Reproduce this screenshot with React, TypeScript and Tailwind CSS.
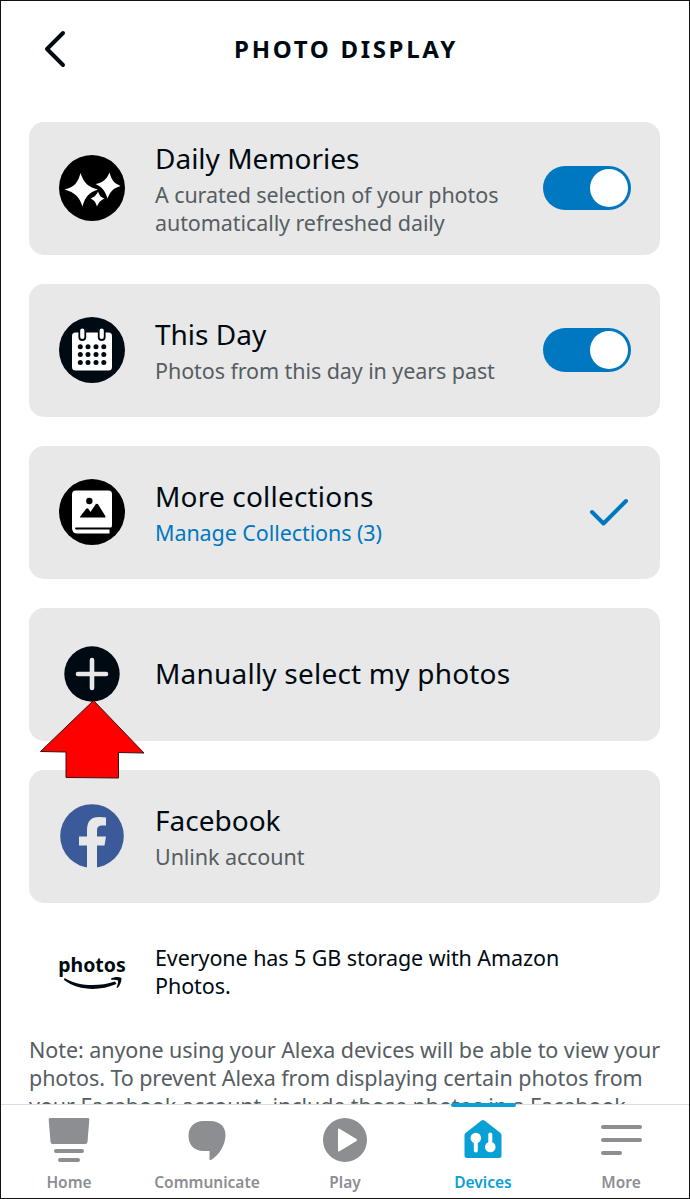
import type { ReactNode } from 'react'

type Card = {
  title: string
  titleClass: string
  sub?: string[]
  subClass?: string
  icon: ReactNode
  right?: ReactNode
  overlay?: ReactNode
}

function SparklesIcon() {
  return (
    <svg width="66" height="66" viewBox="0 0 66 66">
      <circle cx="33" cy="33" r="33" fill="#000" />
      <g fill="#fff">
        <path d="M21.5 18C24.5 27.5 29 32 39 34.5C30 37.5 26 42 23.5 51.5C20.5 42 16 37.5 5.5 34.5C15.5 32 19 27.5 21.5 18Z" />
        <path d="M50.5 17.5C52.5 25 55 28 61.5 31C54 33.5 51.5 36 48.5 43.5C46 36 43.5 32 36.5 29C43.5 27.500 47.5 25 50.5 17.5Z" />
        <path d="M39 36.500C40.5 40.5 41.5 42 45.5 43.5C41.500 45.5 40 47 38 51.5C36.5 47 35.5 45.5 31.5 43.5C35.5 42 37 40.5 39 36.5Z" />
      </g>
    </svg>
  )
}

function CalendarIcon() {
  const cols = [21.3, 29, 37, 44.8]
  const rows = [29.7, 37.6, 45.5]
  return (
    <svg width="66" height="66" viewBox="0 0 66 66">
      <circle cx="33" cy="33" r="33" fill="#000a12" />
      <rect x="13" y="15.5" width="40" height="38" rx="3.5" fill="#fff" />
      {[23.3, 42.7].map((x) => (
        <rect key={x} x={x - 3} y="10.5" width="6" height="12.5" rx="3" fill="#fff" stroke="#000a12" strokeWidth="1.8" />
      ))}
      {rows.map((y) => cols.map((x) => <circle key={`${x}-${y}`} cx={x} cy={y} r="2.5" fill="#000a12" />))}
    </svg>
  )
}

function AlbumIcon() {
  return (
    <svg width="66" height="66" viewBox="0 0 66 66">
      <circle cx="33" cy="33" r="33" fill="#000" />
      <path d="M17 11.5H49.5Q53 11.5 53 15V46Q53 49 50.5 49.5V54.5H18.5Q13 54.5 13 49V15.5Q13 11.5 17 11.5Z" fill="#fff" />
      <path d="M17 49.5H52" stroke="#000" strokeWidth="1.8" strokeLinecap="round" />
      <circle cx="30.3" cy="22" r="3.2" fill="#000" />
      <path d="M21 38.5Q21 37.5 22 36.5L27 30Q28 28.5 29.5 30L31.5 33L36.5 25.5Q37.8 24 39.2 25.5L46 36.5Q47 38.5 46 38.5Z" fill="#000" />
    </svg>
  )
}

function PlusIcon() {
  return (
    <svg width="56" height="56" viewBox="0 0 56 56">
      <circle cx="28" cy="28" r="27.7" fill="#000a12" />
      <path d="M28 14V42M14 28H42" stroke="#e8e8e8" strokeWidth="4.6" strokeLinecap="round" />
    </svg>
  )
}

function FacebookIcon() {
  return (
    <svg width="64" height="64" viewBox="0 0 64 64">
      <circle cx="32" cy="32" r="31.8" fill="#3b5a9a" />
      <path d="M27 64V41.5H19V32.5H27V26Q27 13 39 13Q43 13 46 13.5V21.5H42Q37 21.5 37 26V32.5H46L44.5 41.5H37V64Z" fill="#e8e8e8" />
    </svg>
  )
}

function Toggle() {
  return (
    <div className="flex h-11 w-22 items-center justify-end rounded-full bg-[#0078c1] pr-[3px]">
      <div className="size-[38px] rounded-full bg-white" />
    </div>
  )
}

function PointerArrow() {
  return (
    <svg className="absolute top-[91px] left-[9px] z-10" width="108" height="81" viewBox="0 0 108 81">
      <path d="M55.5 1.5L2.5 52.5L28 53V78.5L80.5 79V53.5L106 54Z" fill="#ff0000" stroke="#3a1111" strokeWidth="1" />
    </svg>
  )
}

const CARDS: Card[] = [
  {
    title: 'Daily Memories',
    titleClass: 'tracking-normal',
    sub: ['A curated selection of your photos', 'automatically refreshed daily'],
    icon: <SparklesIcon />,
    right: <Toggle />,
  },
  {
    title: 'This Day',
    titleClass: 'tracking-normal',
    sub: ['Photos from this day in years past'],
    icon: <CalendarIcon />,
    right: <Toggle />,
  },
  {
    title: 'More collections',
    titleClass: 'tracking-[0.19px]',
    sub: ['Manage Collections (3)'],
    subClass: 'text-[#0078c1]',
    icon: <AlbumIcon />,
    right: (
      <svg width="44" height="34" viewBox="0 0 44 34">
        <path d="M5 17L16.500 28.5L39 6" fill="none" stroke="#0078c1" strokeWidth="4" strokeLinecap="round" strokeLinejoin="round" />
      </svg>
    ),
  },
  {
    title: 'Manually select my photos',
    titleClass: 'tracking-[0.21px] -mt-1',
    icon: <PlusIcon />,
    overlay: <PointerArrow />,
  },
  {
    title: 'Facebook',
    titleClass: 'tracking-normal',
    sub: ['Unlink account'],
    icon: <FacebookIcon />,
  },
]

const NOTE = [
  'Note: anyone using your Alexa devices will be able to view your',
  'photos. To prevent Alexa from displaying certain photos from',
  'your Facebook account, include those photos in a Facebook',
]

const TABS: { label: string; active?: boolean; icon: ReactNode }[] = [
  {
    label: 'Home',
    icon: (
      <>
        <path d="M3 1H41Q42.5 1 42.3 2.5L40.5 25Q40.3 27 38.5 27H5.5Q3.7 27 3.5 25L1.7 2.5Q1.5 1 3 1Z" />
        <rect x="7" y="32" width="30" height="4" rx="2" />
        <rect x="11" y="41" width="22" height="4" rx="2" />
      </>
    ),
  },
  {
    label: 'Communicate',
    icon: <path d="M18.5 4H25C34.5 4 40.5 9.5 40.5 18C40.5 28 34 38.5 26 43Q24.5 43.5 24.5 42V34H18.5C9 34 3.5 27.5 3.5 19C3.5 10.5 9 4 18.5 4Z" />,
  },
  {
    label: 'Play',
    icon: <path fillRule="evenodd" d="M22 1A22 22 0 1 1 22 45A22 22 0 1 1 22 1ZM15 12.5V33.5Q15 35 16.5 34.2L33.5 24Q34.5 23 33.5 22L16.5 11.8Q15 11 15 12.5Z" />,
  },
  {
    label: 'Devices',
    active: true,
    icon: (
      <>
        <path d="M20.5 3.5Q22 2.5 23.5 3.5L39.5 16Q40.5 17 40.5 18.5V38.5Q40.5 41 38 41H6Q3.5 41 3.5 38.5V18.5Q3.5 17 4.5 16Z" />
        <circle cx="14.8" cy="21" r="5.3" fill="#fff" />
        <circle cx="29.3" cy="30" r="5.3" fill="#fff" />
        <path d="M14.8 22V33.5M29.3 29V17.5" stroke="#fff" strokeWidth="4" strokeLinecap="round" />
      </>
    ),
  },
  {
    label: 'More',
    icon: (
      <>
        <rect x="2" y="8" width="41" height="4" rx="2" />
        <rect x="2" y="21" width="41" height="4" rx="2" />
        <rect x="2" y="34" width="21" height="4" rx="2" />
      </>
    ),
  },
]

export default function App() {
  return (
    <div className="flex h-[1199px] w-[690px] flex-col overflow-hidden border border-[#111] bg-white font-['Noto_Sans',sans-serif] text-[#000a12]">
      <header className="flex h-[121px] shrink-0 items-start pt-7">
        <button className="ml-[37px] flex size-10 items-center justify-center" aria-label="Back">
          <svg width="28" height="40" viewBox="0 0 28 40" fill="none" stroke="currentColor" strokeWidth="4" strokeLinecap="round" strokeLinejoin="round">
            <path d="M19 4L3 20L19 36" />
          </svg>
        </button>
        <h1 className="mr-[75px] flex-1 text-center text-2xl leading-10 font-bold tracking-[2.7px]">PHOTO DISPLAY</h1>
      </header>

      <main className="min-h-0 flex-1 overflow-hidden px-7">
        <div className="flex flex-col gap-[29px]">
          {CARDS.map((card) => (
            <section key={card.title} className="relative mr-px flex h-[133px] items-center rounded-[15px] bg-[#e8e8e8]">
              <div className="flex w-[126px] shrink-0 justify-center pb-px">{card.icon}</div>
              <div className="flex-1 whitespace-nowrap">
                <h2 className={`text-[28px] leading-9 ${card.titleClass}`}>{card.title}</h2>
                {card.sub && (
                  <div className={`mt-[5px] text-[21.5px] leading-7 tracking-[-0.08px] ${card.subClass ?? 'text-[#565d63]'}`}>
                    {card.sub.map((line) => (
                      <p key={line}>{line}</p>
                    ))}
                  </div>
                )}
              </div>
              {card.right && <div className="mr-[29px] pb-px">{card.right}</div>}
              {card.overlay}
            </section>
          ))}
        </div>

        <div className="mt-[41px] flex items-center">
          <div className="flex w-[126px] shrink-0 flex-col items-center">
            <span className="text-[19.5px] leading-6 font-bold">photos</span>
            <svg className="-mt-px" width="66" height="16" viewBox="0 0 66 16" fill="#000a12">
              <path d="M5.5 2C20 10.5 39 11 56 5.5L57.5 8C40 15.5 19 14.5 5 4Z" />
              <path d="M52 2.5C56 0.5 60 0.5 62.5 2C62.5 6 61 9.5 58.5 12L57.5 11.5C58.5 9 59.5 6.500 59 4.5C57 3.500 54.500 3.500 52.500 4Z" />
            </svg>
          </div>
          <p className="text-[21.5px] leading-7 tracking-[-0.08px]">
            Everyone has 5 GB storage with Amazon
            <br />
            Photos.
          </p>
        </div>

        <div className="mt-9 text-[21.5px] leading-7 tracking-[-0.07px] whitespace-nowrap text-[#565d63]">
          {NOTE.map((line) => (
            <p key={line}>{line}</p>
          ))}
        </div>
      </main>

      <nav className="-ml-px flex h-[94px] shrink-0 border-t border-[#dcdddf] bg-white">
        {TABS.map((tab) => (
          <div key={tab.label} className={`relative flex w-[138px] shrink-0 flex-col items-center pt-3 ${tab.active ? 'text-[#08a0d5]' : 'text-[#8d8e92]'}`}>
            {tab.active && <div className="absolute -top-0.5 h-1 w-[65px] rounded-full bg-[#08a0d5]" />}
            <svg width="44" height="46" viewBox="0 0 44 46" fill="currentColor">
              {tab.icon}
            </svg>
            <span className="mt-[7px] text-[15.5px] leading-6 font-semibold">{tab.label}</span>
          </div>
        ))}
      </nav>
    </div>
  )
}
